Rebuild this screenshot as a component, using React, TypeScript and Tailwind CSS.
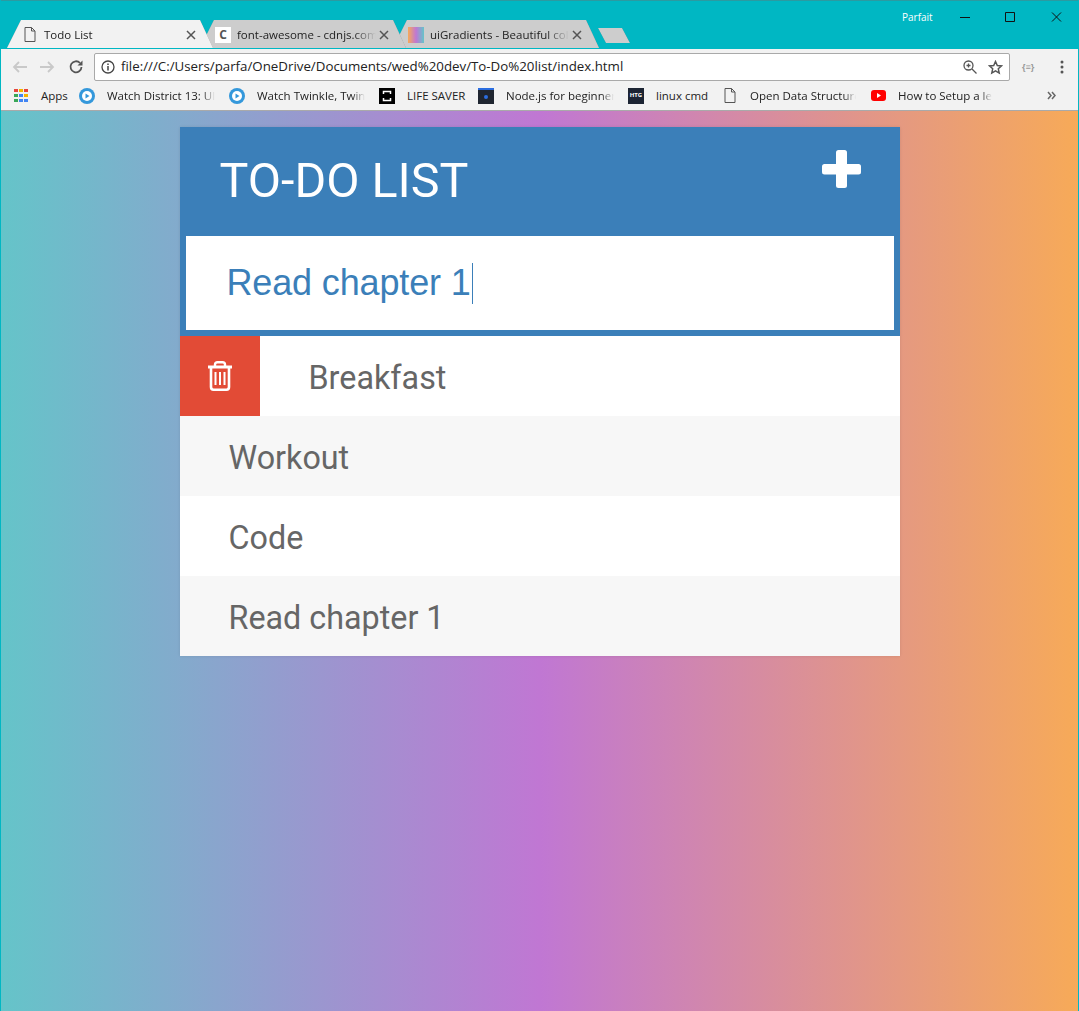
const font = "font-['Roboto',sans-serif]";
const chromeFont = "font-['Open_Sans','Noto_Sans',sans-serif]";

const todos = ["Workout", "Code", "Read chapter 1"];

function Tab({
  title,
  icon,
  layer,
  active,
}: {
  title: string;
  icon: React.ReactNode;
  layer: string;
  active?: boolean;
}) {
  return (
    <div className={`${layer} relative -mr-[13px] [filter:drop-shadow(0.5px_0_0_#8a8a8a)]`}>
      <div
        className={`flex h-[28px] w-[206px] items-center pt-[1px] pr-[17px] pl-[15px] [clip-path:polygon(0_100%,14px_0,calc(100%-13px)_0,100%_100%)] ${
          active ? "bg-[#f2f2f2]" : "bg-[#cdcdcd]"
        }`}
      >
        <span className="flex h-4 w-4 shrink-0 items-center justify-center">
          {icon}
        </span>
        <span className="mr-[3px] ml-[6px] flex-1 overflow-hidden text-[11.500px] leading-[16px] whitespace-nowrap text-[#222] [mask-image:linear-gradient(90deg,#000_84%,transparent)]">
          {title}
        </span>
        <svg width="10" height="10" viewBox="0 0 10 10" className="shrink-0">
          <path d="M1 1l8 8M9 1l-8 8" stroke="#555" strokeWidth="1.500" />
        </svg>
      </div>
    </div>
  );
}

function Bookmark({
  icon,
  label,
  width,
  fade,
}: {
  icon: React.ReactNode;
  label: string;
  width: string;
  fade?: boolean;
}) {
  return (
    <div
      className={`${width} flex shrink-0 items-center gap-[12px] ${fade ? "pr-[14px]" : ""}`}
    >
      <span className="flex h-4 w-4 shrink-0 items-center justify-center">
        {icon}
      </span>
      <span
        className={`text-[11.500px] leading-[16px] whitespace-nowrap text-[#222] ${
          fade
            ? "flex-1 overflow-hidden [mask-image:linear-gradient(90deg,#000_88%,transparent)]"
            : ""
        }`}
      >
        {label}
      </span>
    </div>
  );
}

function PlayDot() {
  return (
    <svg width="16" height="16" viewBox="0 0 16 16">
      <circle cx="8" cy="8" r="8" fill="#3498db" />
      <circle cx="8" cy="8" r="5" fill="#fff" />
      <path d="M6.500 5.500v5l4-2.500z" fill="#3498db" />
    </svg>
  );
}

function PageIcon() {
  return (
    <svg width="12" height="15" viewBox="0 0 12 15" fill="none">
      <path d="M1 .5h6.500L11 4v10.500H1zM7.500.5V4H11" stroke="#555" />
    </svg>
  );
}

function AppsGrid() {
  const colors = [
    "#e8453c",
    "#f4b400",
    "#e8453c",
    "#3aa757",
    "#4285f4",
    "#f4b400",
    "#3aa757",
    "#4285f4",
    "#4285f4",
  ];
  return (
    <div className="grid grid-cols-3 gap-[1.500px]">
      {colors.map((c, i) => (
        <span
          key={i}
          className="h-[3.500px] w-[3.500px]"
          style={{ background: c }}
        />
      ))}
    </div>
  );
}

function BrowserChrome() {
  return (
    <header className={`${chromeFont} h-[111px] border-b border-[#a9a9a9]`}>
      <div className="relative h-[49px] border-t border-[#6f6f6f]/40 bg-[#00b7c3] pt-[19px] pl-[6px]">
        <div className="flex items-start">
          <Tab active layer="z-30" title="Todo List" icon={<PageIcon />} />
          <Tab
            layer="z-20"
            title="font-awesome - cdnjs.com"
            icon={
              <span className="flex h-4 w-4 items-center justify-center bg-white text-[12px] font-bold text-[#555]">
                C
              </span>
            }
          />
          <Tab
            layer="z-10"
            title="uiGradients - Beautiful colors"
            icon={
              <span className="h-4 w-4 bg-[linear-gradient(90deg,#f7aa58,#c077d3,#65c4c9)]" />
            }
          />
          <div className="mt-[8px] ml-[12px] [filter:drop-shadow(0_0_0.5px_#00808a)]">
            <div className="h-[15px] w-[32px] bg-[#cdcdcd] [clip-path:polygon(0_0,24px_0,100%_100%,8px_100%)]" />
          </div>
        </div>
        <span className="absolute top-[10px] left-[901px] text-[10px] leading-[12px] text-white">
          Parfait
        </span>
        <svg
          width="115"
          height="12"
          viewBox="0 0 115 12"
          fill="none"
          stroke="#111"
          className="absolute top-[10px] right-[8px]"
        >
          <path d="M5 6.500h10M50.500 1.500h9v9h-9zM97 1.500l9 9M106 1.500l-9 9" />
        </svg>
      </div>

      <div className="flex h-[34px] items-start bg-[#f2f2f2] pt-[4px] pl-[11px]">
        <svg
          width="76"
          height="16"
          viewBox="0 0 76 16"
          fill="none"
          className="mt-[6px] shrink-0"
        >
          <path
            d="M15 8H2M7 3 2 8l5 5M28 8h13M36 3l5 5-5 5"
            stroke="#c9c9c9"
            strokeWidth="1.800"
          />
          <path
            d="M68 4a5.500 5.500 0 1 0 1.500 4"
            stroke="#555"
            strokeWidth="1.800"
          />
          <path d="M70.500 1.500v5h-5z" fill="#555" />
        </svg>
        <div className="ml-[6px] flex h-[28px] w-[916px] items-center rounded-[2px] border border-[#a9a9a9] bg-white pl-[6px]">
          <svg
            width="14"
            height="14"
            viewBox="0 0 14 14"
            fill="none"
            className="shrink-0"
          >
            <circle cx="7" cy="7" r="6" stroke="#444" strokeWidth="1.300" />
            <path d="M7 6v4.500M7 3.500v1.500" stroke="#444" strokeWidth="1.500" />
          </svg>
          <span className="ml-[6px] flex-1 text-[13.300px] whitespace-nowrap text-[#222]">
            file:///C:/Users/parfa/OneDrive/Documents/wed%20dev/To-Do%20list/index.html
          </span>
          <svg
            width="14"
            height="14"
            viewBox="0 0 14 14"
            fill="none"
            className="mr-[11px] shrink-0"
          >
            <circle cx="5.500" cy="5.500" r="4.500" stroke="#555" strokeWidth="1.300" />
            <path
              d="M9 9l4.500 4.500M3.500 5.500h4M5.500 3.500v4"
              stroke="#555"
              strokeWidth="1.300"
            />
          </svg>
          <svg
            width="15"
            height="15"
            viewBox="0 0 15 15"
            fill="none"
            className="mr-[6px] shrink-0"
          >
            <path
              d="M7.500 1.500l1.800 4 4.200.4-3.200 2.900.9 4.300-3.700-2.200-3.700 2.200.9-4.300L1.500 5.900l4.200-.4z"
              stroke="#555"
              strokeWidth="1.500"
            />
          </svg>
        </div>
        <span className="mt-[6px] ml-[12px] w-[26px] text-[9px] leading-[16px] font-bold text-[#999]">
          {"{≡}"}
        </span>
        <svg width="4" height="14" viewBox="0 0 4 14" className="mt-[7px] ml-[12px]">
          <circle cx="2" cy="2" r="1.500" fill="#555" />
          <circle cx="2" cy="7" r="1.500" fill="#555" />
          <circle cx="2" cy="12" r="1.500" fill="#555" />
        </svg>
      </div>

      <div className="flex h-[27px] items-center bg-[#f2f2f2] pb-[2px] pl-[12px]">
        <Bookmark width="w-[66px]" icon={<AppsGrid />} label="Apps" />
        <Bookmark
          fade
          width="w-[150px]"
          icon={<PlayDot />}
          label="Watch District 13: Ultimatum"
        />
        <Bookmark
          fade
          width="w-[150px]"
          icon={<PlayDot />}
          label="Watch Twinkle, Twinkle"
        />
        <Bookmark
          width="w-[99px]"
          label="LIFE SAVER"
          icon={
            <svg width="16" height="16" viewBox="0 0 16 16" fill="none">
              <rect width="16" height="16" fill="#000" />
              <path
                d="M4.500 6V3.500h7V6M4.500 10v2.500h7V10"
                stroke="#fff"
                strokeWidth="1.500"
              />
            </svg>
          }
        />
        <Bookmark
          fade
          width="w-[150px]"
          label="Node.js for beginners"
          icon={
            <span className="flex h-4 w-4 items-center justify-center border-t-2 border-[#2b6de0] bg-[#1f2530]">
              <span className="h-1 w-1 rounded-full bg-[#2b6de0]" />
            </span>
          }
        />
        <Bookmark
          width="w-[94px]"
          label="linux cmd"
          icon={
            <span className="flex h-4 w-4 items-center justify-center bg-[#1c2433] text-[6px] font-bold text-white">
              HTG
            </span>
          }
        />
        <Bookmark
          fade
          width="w-[148px]"
          icon={<PageIcon />}
          label="Open Data Structures"
        />
        <Bookmark
          fade
          width="w-[136px]"
          label="How to Setup a led b"
          icon={
            <svg width="15" height="11" viewBox="0 0 15 11">
              <rect width="15" height="11" rx="3" fill="#f00" />
              <path d="M6 3v5l4-2.500z" fill="#fff" />
            </svg>
          }
        />
        <svg width="9" height="9" viewBox="0 0 9 9" fill="none" className="ml-[41px]">
          <path d="M1 1l3 3.500L1 8M5 1l3 3.500L5 8" stroke="#666" strokeWidth="1.500" />
        </svg>
      </div>
    </header>
  );
}

export default function App() {
  return (
    <div className="min-h-[1011px] overflow-hidden border-x border-[#00b7c3]">
      <BrowserChrome />
      <main className="h-[900px] bg-[linear-gradient(90deg,#65c4c9,#c077d3,#f7aa58)] pt-[16px]">
        <section
          className={`${font} mx-auto w-[720px] shadow-[0_0_3px_rgba(0,0,0,0.1)]`}
        >
          <div className="flex h-[109px] items-start justify-between bg-[#3b7fb9] pr-[39px] pl-[40px]">
            <h1 className="mt-[25px] text-[48.400px] leading-[58px] font-normal text-white">
              TO-DO LIST
            </h1>
            <svg
              width="39"
              height="38"
              viewBox="0 0 39 38"
              fill="#fff"
              className="mt-[23px]"
            >
              <rect x="14" y="0" width="11" height="38" rx="2.500" />
              <rect x="0" y="14" width="39" height="10.500" rx="2.500" />
            </svg>
          </div>
          <div className="h-[100px] border-[6px] border-t-0 border-[#3b7fb9] bg-white pl-[41px]">
            <p className="flex h-[94px] items-center font-['Liberation_Sans',sans-serif] text-[36px] tracking-[-0.15px] text-[#3b7fb9]">
              Read chapter 1
              <span className="ml-[1px] h-[41px] w-px bg-[#3b7fb9]" />
            </p>
          </div>
          <ul className="text-[32.300px] text-[#666]">
            <li className="flex h-20 items-center bg-white">
              <span className="mr-[49px] flex h-20 w-20 items-center justify-center bg-[#e24b36]">
                <svg width="24" height="30" viewBox="0 0 24 30" fill="none" stroke="#fff">
                  <path d="M7 6V3.500Q7 1.200 9.500 1.200h5Q17 1.200 17 3.500V6" strokeWidth="2.400" />
                  <path d="M0 6h24" strokeWidth="3" />
                  <path d="M3 6v20Q3 28.700 5.500 28.700h13q2.500 0 2.500-2.700V6" strokeWidth="2.600" />
                  <path d="M7.500 11v13M12 11v13M16.500 11v13" strokeWidth="2" />
                </svg>
              </span>
              <span className="pt-[4px]">Breakfast</span>
            </li>
            {todos.map((todo, i) => (
              <li
                key={todo}
                className={`flex h-20 items-center pt-[4px] pl-[49px] ${
                  i % 2 === 0 ? "bg-[#f7f7f7]" : "bg-white"
                }`}
              >
                {todo}
              </li>
            ))}
          </ul>
        </section>
      </main>
    </div>
  );
}
